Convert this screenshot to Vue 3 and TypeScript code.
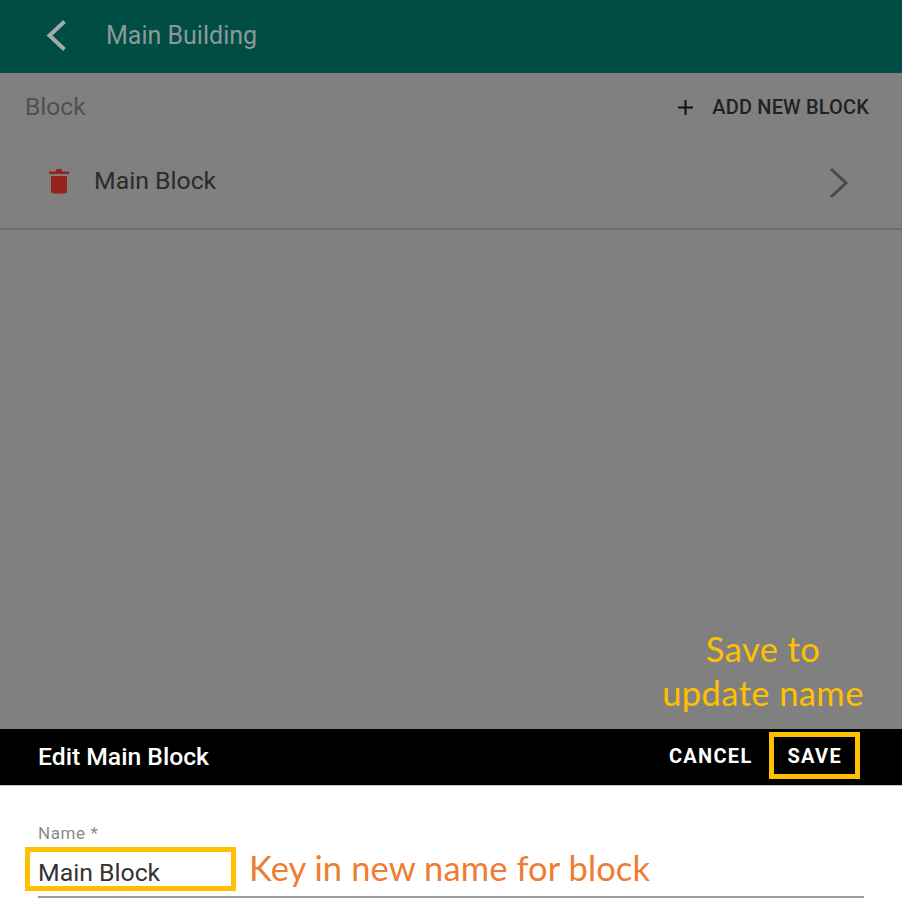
<script setup lang="ts">
const blocks = ['Main Block'];
</script>

<template>
  <div class="page">
    <header class="topbar">
      <svg class="back" width="24" height="34" viewBox="0 0 24 34">
        <path d="M19.5 2.500 L4.500 16.500 L19.5 30.500" fill="none" stroke="#a3abaa" stroke-width="4" />
      </svg>
      <span class="title">Main Building</span>
    </header>

    <main class="content">
      <div class="section-head">
        <span class="section-name">Block</span>
        <div class="add-btn">
          <svg width="17" height="17" viewBox="0 0 17 17">
            <path d="M8.500 1 V16 M1 8.500 H16" stroke="#111" stroke-width="2" />
          </svg>
          <span>ADD NEW BLOCK</span>
        </div>
      </div>
      <div v-for="b in blocks" :key="b" class="row">
        <svg class="trash" width="20" height="26" viewBox="0 0 20 26">
          <path d="M0 3.500 H6.500 L7.500 1 H12.500 L13.500 3.500 H20 V6 H0 Z" fill="#962219" />
          <path d="M2 8 H18 V23 Q18 25.500 15.500 25.500 H4.500 Q2 25.500 2 23 Z" fill="#962219" />
        </svg>
        <span class="row-name">{{ b }}</span>
        <svg class="next" width="20" height="32" viewBox="0 0 20 32">
          <path d="M2 2 L17 16 L2 30" fill="none" stroke="#4a4a4a" stroke-width="3" />
        </svg>
      </div>
    </main>

    <section class="sheet">
      <div class="sheet-bar">
        <span class="sheet-title">Edit Main Block</span>
        <div class="actions">
          <span class="action">CANCEL</span>
          <span class="action save">SAVE</span>
        </div>
      </div>
      <form class="form">
        <label class="field-label">Name *</label>
        <div class="field-value">
          <span class="value-box">Main Block</span>
          <span class="hint">Key in new name for block</span>
        </div>
      </form>
    </section>

    <div class="save-note">Save to<br />update name</div>
  </div>
</template>

<style scoped>
.page {
  position: relative;
  width: 902px;
  height: 913px;
  overflow: hidden;
  display: flex;
  flex-direction: column;
  background: #808080;
  font-family: Roboto, "Liberation Sans", sans-serif;
}
.topbar {
  height: 73px;
  flex: none;
  display: flex;
  align-items: center;
  padding: 0 0 2px 45px;
  background: #004d45;
  box-sizing: border-box;
}
.back {
  margin-right: 37px;
}
.title {
  font-size: 25px;
  color: #8a9a98;
}
.content {
  flex: 1;
  display: flex;
  flex-direction: column;
}
.section-head {
  height: 68px;
  display: flex;
  align-items: center;
  justify-content: space-between;
  padding: 0 33px 0 25px;
}
.section-name {
  font-size: 24.6px;
  color: #505050;
  margin-bottom: 2px;
}
.add-btn {
  display: flex;
  align-items: center;
  gap: 18px;
  font-size: 20px;
  letter-spacing: 0.15px;
  font-weight: 500;
  color: #222;
}
.row {
  height: 79px;
  display: flex;
  align-items: center;
  padding: 0 53px 8px 49px;
  border-bottom: 2px solid #6f6f6f;
}
.trash {
  margin-right: 25px;
}
.row-name {
  flex: 1;
  font-size: 24.8px;
  color: #2b2b2b;
}
.next {
  margin-top: 4px;
}
.sheet {
  flex: none;
  height: 184px;
  background: #fff;
}
.sheet-bar {
  height: 56px;
  display: flex;
  align-items: center;
  justify-content: space-between;
  box-sizing: border-box;
  padding: 0 42px 2px 38px;
  background: #000;
  color: #fff;
  box-shadow: 0 1px 0 #c4c4c4;
}
.sheet-title {
  font-size: 24.7px;
  font-weight: 500;
}
.actions {
  display: flex;
  align-items: center;
  gap: 16px;
}
.action {
  font-size: 20px;
  font-weight: 700;
  letter-spacing: 1.3px;
  line-height: 37px;
  padding-top: 1px;
}
.save {
  margin-top: -2px;
  border: 5px solid #ffc000;
  padding: 1px 13px 0 14px;
  line-height: 36px;
}
.form {
  padding: 38px 38px 0;
}
.field-label {
  display: block;
  font-size: 17px;
  letter-spacing: 0.6px;
  line-height: 20px;
  color: #8a8a8a;
}
.field-value {
  display: flex;
  align-items: flex-start;
  height: 49px;
  margin-top: 4px;
  width: 826px;
  border-bottom: 2px solid #999;
}
.value-box {
  box-sizing: border-box;
  width: 211px;
  height: 44px;
  margin-left: -13px;
  padding: 6px 0 0 8px;
  border: 5px solid #ffc000;
  font-size: 24.8px;
  line-height: 30px;
  color: #333;
}
.hint {
  margin-left: 13px;
  font-family: Lato, "Open Sans", sans-serif;
  font-size: 34.5px;
  letter-spacing: 0.1px;
  line-height: 42px;
  color: #ed7d31;
}
.save-note {
  position: absolute;
  left: 624px;
  top: 627px;
  width: 278px;
  text-align: center;
  font-family: Lato, "Open Sans", sans-serif;
  font-size: 34.5px;
  letter-spacing: 0.4px;
  line-height: 44px;
  color: #ffc000;
}
</style>
